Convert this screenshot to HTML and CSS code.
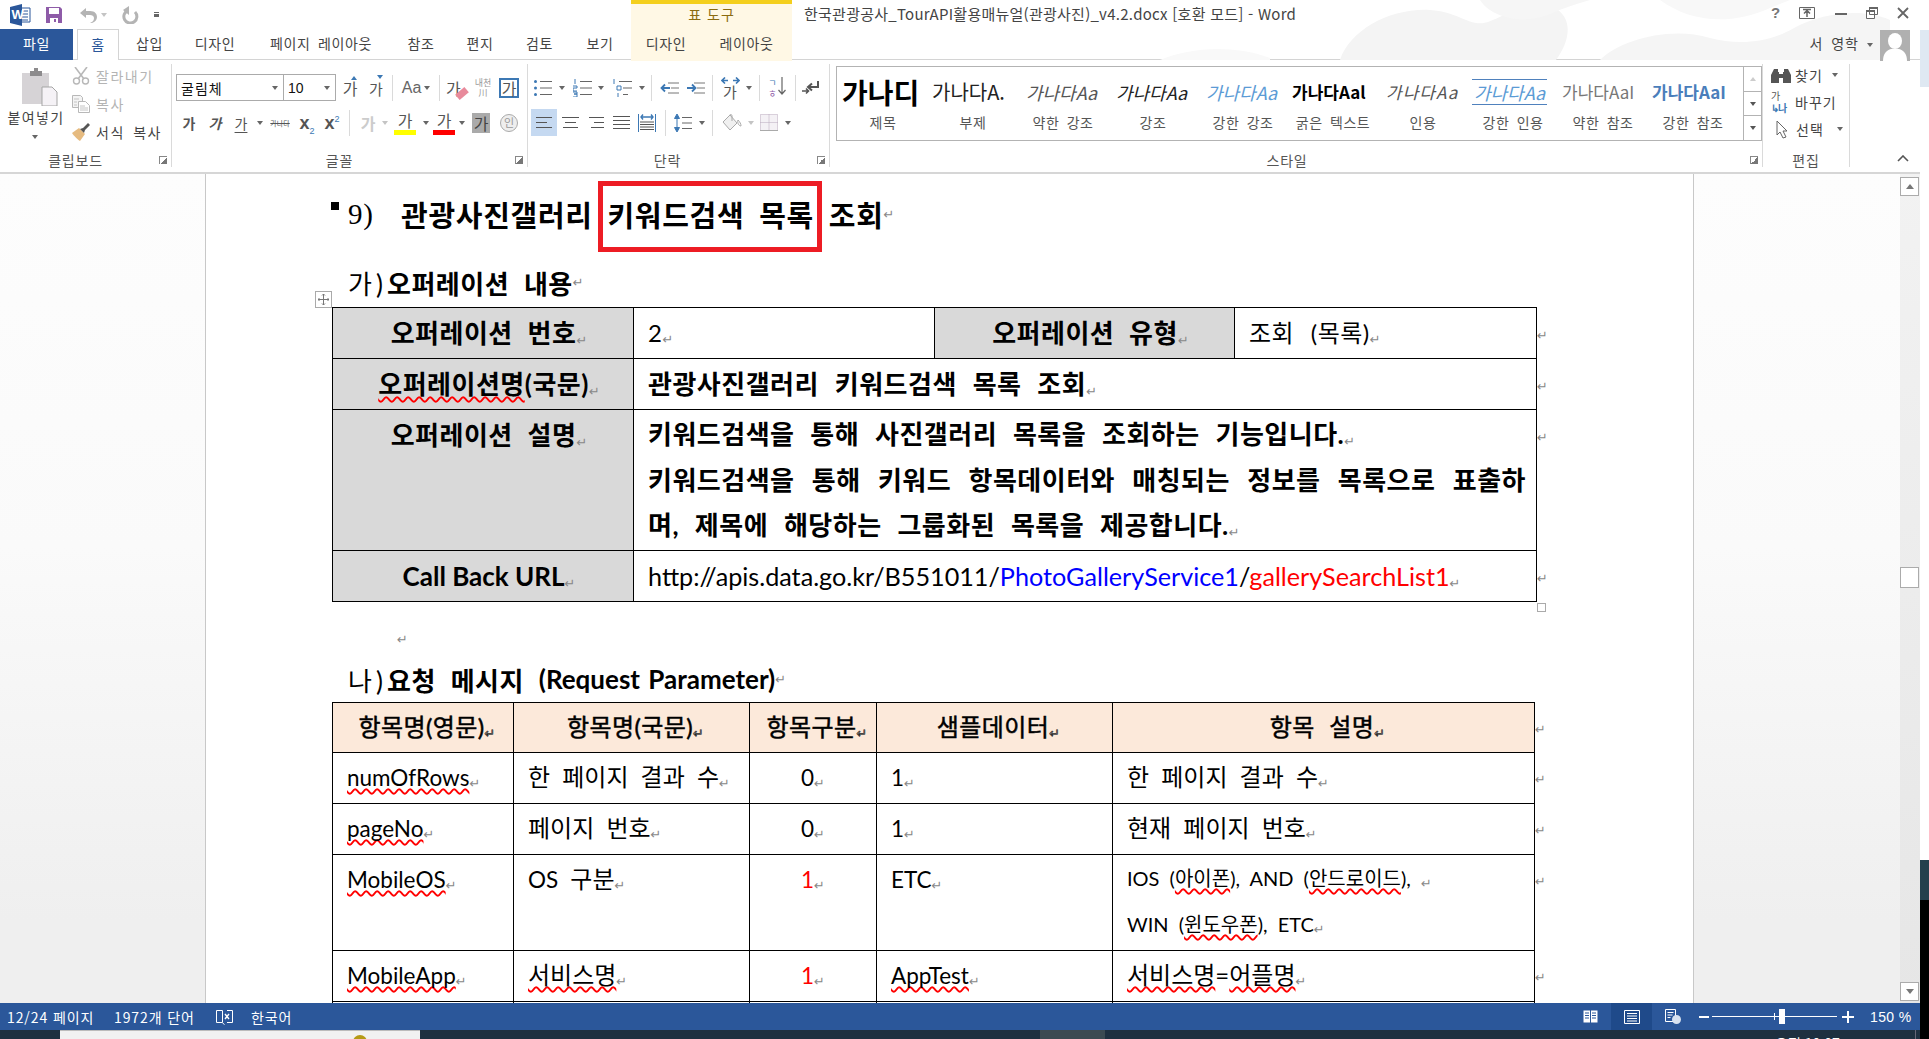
FILE: index.html
```html
<!DOCTYPE html>
<html lang="ko">
<head>
<meta charset="utf-8">
<title>한국관광공사_TourAPI활용매뉴얼(관광사진)_v4.2.docx [호환 모드] - Word</title>
<link rel="stylesheet" href="styles.css">
</head>
<body>
<div class="screen">
<div class="window">

  <header class="top">
    <svg class="clouds" width="820" height="60" viewBox="0 0 820 60">
      <path d="M240 60c10-30 50-52 90-50 30 2 40 18 58 12 20-8 50-26 70-12 16 12 10 34-2 50z" fill="#f4f4f4"/>
      <path d="M500 60c20-20 70-34 110-22 30 8 60 4 84-10 30-16 70-20 96-8v40z" fill="#f5f5f5"/>
      <path d="M380 0c10 16 40 26 70 14 14-6 26-10 40-14z" fill="#f6f6f6"/>
      <path d="M560 0c30 22 70 26 110 8l20-8z" fill="#f8f8f8"/>
      <path d="M60 60c30-12 70-16 110-2v2z" fill="#f9f9f9"/>
    </svg>
    <div class="titlebar">
      <div class="qat">
        <svg class="logo" width="22" height="22" viewBox="0 0 22 22">
          <path d="M10 4h11v14H10z" fill="#fff" stroke="#2b579a"/>
          <path d="M13 7h6M13 10h6M13 13h6M13 16h6" stroke="#2b579a"/>
          <path d="M1 3l12-3v22L1 19z" fill="#2b579a"/>
          <text x="2.500" y="15" class="logo-w">W</text>
        </svg>
        <svg class="save" width="18" height="18" viewBox="0 0 18 18">
          <path d="M1 1h14l2 2v14H1z" fill="#8e5ba8"/>
          <path d="M4 2h10v6H4z" fill="#fff"/>
          <path d="M5 12h8v5H5z" fill="#fff"/>
          <path d="M9 13h2v3H9z" fill="#8e5ba8"/>
        </svg>
        <svg class="undo" width="20" height="18" viewBox="0 0 20 18">
          <path d="M2 7l6-5v3h4c5 0 7 3 7 6s-2 5-5 6h-2c3-1 4-3 4-5s-2-3-4-3H8v3z" fill="#b4b4b4"/>
        </svg>
        <i class="car lite"></i>
        <svg class="redo" width="18" height="18" viewBox="0 0 18 18">
          <path d="M7 4.500a6.500 6.500 0 1 0 7 1.500" fill="none" stroke="#b4b4b4" stroke-width="3"/>
          <path d="M8 0v9L2 4z" fill="#b4b4b4"/>
        </svg>
        <i class="qat-more"></i>
      </div>
      <div class="ctx-head">표 도구</div>
      <div class="doc-title">한국관광공사_TourAPI활용매뉴얼(관광사진)_v4.2.docx [호환 모드] - Word</div>
      <div class="win-ctl">
        <span class="help">?</span>
        <svg width="16" height="12" viewBox="0 0 16 12"><path d="M.5.500h15v11H.5z" fill="none" stroke="#666"/><path d="M4 2.500h8M8 10V4M5 6.500L8 3.500l3 3" fill="none" stroke="#666" stroke-width="1.500"/></svg>
        <svg width="12" height="12" viewBox="0 0 12 12"><path d="M0 6h12v2H0z" fill="#666"/></svg>
        <svg width="12" height="12" viewBox="0 0 12 12"><path d="M3.500.500h8v7h-8zM.5 4h8v7.500h-8z" fill="#fff" stroke="#666"/><path d="M3 1h9M0 4h9" stroke="#666" stroke-width="2"/></svg>
        <svg width="12" height="12" viewBox="0 0 12 12"><path d="M1 1l10 10M11 1L1 11" stroke="#666" stroke-width="1.800"/></svg>
      </div>
    </div>
    <nav class="tabs">
      <div class="tab file">파일</div>
      <div class="tab active">홈</div>
      <div class="tab">삽입</div>
      <div class="tab">디자인</div>
      <div class="tab">페이지 레이아웃</div>
      <div class="tab">참조</div>
      <div class="tab">편지</div>
      <div class="tab">검토</div>
      <div class="tab">보기</div>
      <div class="tab ctx">디자인</div>
      <div class="tab ctx">레이아웃</div>
      <div class="user">
        <span class="user-name">서 영학</span><i class="car"></i>
        <svg class="avatar" width="30" height="31" viewBox="0 0 30 31">
          <path d="M0 0h30v31H0z" fill="#b0b0b0"/>
          <ellipse cx="15" cy="11" rx="7" ry="8" fill="#fff"/>
          <path d="M3 31c0-8 4-11 8-12h8c4 1 8 4 8 12z" fill="#fff"/>
        </svg>
      </div>
    </nav>
  </header>

  <section class="ribbon">
    <div class="group g-clip">
      <div class="body clip-body">
        <div class="paste">
          <svg width="36" height="38" viewBox="0 0 36 38">
            <path d="M0 5h27v31H0z" fill="#d6d3d6"/>
            <path d="M8 3h4V0h4v3h4v5H8z" fill="#8d8b8d"/>
            <path d="M20 19h10l5 5v14H20z" fill="#f5f2f6" stroke="#a5a5a5"/>
          </svg>
          <span>붙여넣기</span>
          <i class="car"></i>
        </div>
        <div class="clip-list">
          <div class="clip-row off">
            <svg width="18" height="18" viewBox="0 0 18 18"><path d="M3 0l9 12M15 0L6 12" stroke="#b8b8b8" stroke-width="1.600"/><circle cx="4.500" cy="14" r="3" fill="none" stroke="#b8b8b8" stroke-width="1.400"/><circle cx="13.500" cy="14" r="3" fill="none" stroke="#b8b8b8" stroke-width="1.400"/></svg>
            <span>잘라내기</span>
          </div>
          <div class="clip-row off">
            <svg width="18" height="18" viewBox="0 0 18 18"><path d="M.5.500h8l2 2v10H.5z" fill="#f4f4f4" stroke="#b8b8b8"/><path d="M6.500 6.500h7l4 4v7h-11z" fill="#fff" stroke="#b8b8b8"/><path d="M2 4h5M2 7h3M2 10h3M8 11h5M8 13h8M8 15h8" stroke="#c4c4c4"/></svg>
            <span>복사</span>
          </div>
          <div class="clip-row">
            <svg width="18" height="18" viewBox="0 0 18 18"><path d="M0 10l7-5 6 6-5 7c-2-1-6-5-8-8z" fill="#e6bb80"/><path d="M8 6l3-1 5-5 2 2-5 5-1 3z" fill="#555"/></svg>
            <span>서식 복사</span>
          </div>
        </div>
      </div>
      <div class="glabel">클립보드<i class="launch"></i></div>
    </div>

    <div class="group g-font">
      <div class="body">
        <div class="row font-r1">
          <div class="combo">굴림체<i class="car"></i></div>
          <div class="combo">10<i class="car"></i></div>
          <span class="ga">가<i class="tri up"></i></span>
          <span class="ga sm">가<i class="tri dn"></i></span>
          <i class="sep"></i>
          <span class="aa">Aa<i class="car"></i></span>
          <i class="sep"></i>
          <span class="ga eraser">가<i class="pink"></i></span>
          <span class="naecheon">내천<br>川</span>
          <span class="ga boxed">가</span>
        </div>
        <div class="row font-r2">
          <b class="fmt">가</b>
          <b class="fmt it">가</b>
          <span class="fmt un">가</span>
          <i class="car"></i>
          <span class="fmt st">가나다</span>
          <b class="fmt xx">x<sub>2</sub></b>
          <b class="fmt xx">x<sup>2</sup></b>
          <i class="sep"></i>
          <span class="ga ghost">가</span>
          <i class="car lite"></i>
          <span class="ga pen">가<i class="bar yellow"></i></span>
          <i class="car"></i>
          <span class="ga pen">가<i class="bar red"></i></span>
          <i class="car"></i>
          <span class="ga shade">가</span>
          <span class="circ">인</span>
        </div>
      </div>
      <div class="glabel">글꼴<i class="launch"></i></div>
    </div>

    <div class="group g-para">
      <div class="body">
        <div class="row para-r1">
          <svg width="19" height="18" viewBox="0 0 19 18"><path d="M6 2.500h12M6 9h12M6 15.500h12" stroke="#666"/><circle cx="1.500" cy="2.500" r="1.500" fill="#3c78b4"/><circle cx="1.500" cy="9" r="1.500" fill="#3c78b4"/><circle cx="1.500" cy="15.500" r="1.500" fill="#3c78b4"/></svg>
          <i class="car"></i>
          <svg width="19" height="18" viewBox="0 0 19 18"><path d="M7 2.500h12M7 9h12M7 15.500h12" stroke="#666"/><path d="M2 0v5M0 7h4v2H0v3h4M0 13h4v2H1h3v3H0" fill="none" stroke="#3c78b4"/></svg>
          <i class="car"></i>
          <svg width="20" height="18" viewBox="0 0 20 18"><path d="M7 2.500h13M11 9h9M11 15.500h5" stroke="#666"/><path d="M2 0v5M5 7h4v4H5zM6 14v4" fill="none" stroke="#3c78b4"/></svg>
          <i class="car"></i>
          <i class="sep"></i>
          <svg width="19" height="12" viewBox="0 0 19 12"><path d="M8 1h11M11 6h8M8 11h11" stroke="#777"/><path d="M10 6H2M5 2.500L1.500 6 5 9.500" fill="none" stroke="#3c78b4" stroke-width="1.800"/></svg>
          <svg width="19" height="12" viewBox="0 0 19 12"><path d="M8 1h11M11 6h8M8 11h11" stroke="#777"/><path d="M1 6h8M6 2.500L9.500 6 6 9.500" fill="none" stroke="#3c78b4" stroke-width="1.800"/></svg>
          <i class="sep"></i>
          <span class="dir"><svg width="19" height="7" viewBox="0 0 19 7"><path d="M1 3.500h6M4 .5l-3 3 3 3M12 3.500h6M15 .5l3 3-3 3" fill="none" stroke="#3c78b4" stroke-width="1.600"/></svg><span>가</span></span>
          <i class="car"></i>
          <i class="sep"></i>
          <span class="sortk"><span class="sort-a">ㄱ<br><b>ㅎ</b></span><svg width="8" height="18" viewBox="0 0 8 18"><path d="M4 0v17M.5 13L4 17l3.500-4" fill="none" stroke="#666" stroke-width="1.200"/></svg></span>
          <i class="sep"></i>
          <svg width="18" height="14" viewBox="0 0 18 14"><path d="M16 0v6H7M10 2.500L6 6l4 3.500" fill="none" stroke="#555" stroke-width="2"/><path d="M0 10h6M4 7.500L6.500 10 4 12.500" fill="none" stroke="#555" stroke-width="1.600"/></svg>
        </div>
        <div class="row para-r2">
          <span class="al on"><svg width="16" height="11" viewBox="0 0 16 11"><path d="M0 .5h16M0 5.500h11M0 10.500h16" stroke="#555"/></svg></span>
          <span class="al"><svg width="17" height="11" viewBox="0 0 17 11"><path d="M0 .5h17M3 5.500h11M1 10.500h15" stroke="#555"/></svg></span>
          <span class="al"><svg width="15" height="11" viewBox="0 0 15 11"><path d="M0 .5h15M5 5.500h10M2 10.500h13" stroke="#555"/></svg></span>
          <span class="al"><svg width="17" height="13" viewBox="0 0 17 13"><path d="M0 .5h17M0 4.500h17M0 8.500h17M0 12.500h17" stroke="#555"/></svg></span>
          <span class="al"><svg width="18" height="18" viewBox="0 0 18 18"><path d="M.5 0v18M17.500 0v18" stroke="#3c78b4"/><path d="M3 3h12M5 .5L3 3l2 2.500M13 .5L15 3l-2 2.500" fill="none" stroke="#3c78b4" stroke-width="1.400"/><path d="M2 8h14M2 10.500h14M2 13h14M2 15.500h14" stroke="#555"/></svg></span>
          <i class="sep"></i>
          <svg width="18" height="18" viewBox="0 0 18 18"><path d="M3 0L.5 4.500h5zM3 18L.5 13.500h5zM3 4v10" fill="#3c78b4" stroke="#3c78b4"/><path d="M8 3.500h10M8 9h10M8 14.500h10" stroke="#666"/></svg>
          <i class="car"></i>
          <i class="sep"></i>
          <svg width="20" height="18" viewBox="0 0 20 18"><path d="M8 1L1 8l7 8 7-7z" fill="#f0f0f0" stroke="#aaa"/><path d="M8 1c0-1 2-1 2 1v5M16 6c2 2 3 4 3 6-2 0-4-3-3-6z" fill="none" stroke="#aaa"/></svg>
          <i class="car lite"></i>
          <svg width="18" height="17" viewBox="0 0 18 17"><path d="M.5.500h17v16H.5z" fill="#f4f1f5" stroke="#b9a9bd" stroke-dasharray="1 1"/><path d="M9 .5v16M.5 8.500h17" stroke="#b9a9bd" stroke-dasharray="1 1"/><path d="M0 16.500h18" stroke="#aaa"/></svg>
          <i class="car"></i>
        </div>
      </div>
      <div class="glabel">단락<i class="launch"></i></div>
    </div>

    <div class="group g-style">
      <div class="body">
        <div class="gallery">
          <div class="sty"><div class="pv s-title">가나디</div><span>제목</span></div>
          <div class="sty"><div class="pv s-sub">가나다A.</div><span>부제</span></div>
          <div class="sty"><div class="pv s-weak">가나다Aa</div><span>약한 강조</span></div>
          <div class="sty"><div class="pv s-em">가나다Aa</div><span>강조</span></div>
          <div class="sty"><div class="pv s-strongem">가나다Aa</div><span>강한 강조</span></div>
          <div class="sty"><div class="pv s-bold">가나다Aal</div><span>굵은 텍스트</span></div>
          <div class="sty"><div class="pv s-quote">가나다Aa</div><span>인용</span></div>
          <div class="sty"><div class="pv s-iq"><em>가나다Aa</em></div><span>강한 인용</span></div>
          <div class="sty"><div class="pv s-ref">가나다AaI</div><span>약한 참조</span></div>
          <div class="sty"><div class="pv s-sref">가나다AaI</div><span>강한 참조</span></div>
          <div class="gal-scroll">
            <span class="dis"><i class="tri-b"></i></span>
            <span><i class="tri-b dn"></i></span>
            <span class="more"><i class="tri-b dn"></i></span>
          </div>
        </div>
      </div>
      <div class="glabel">스타일<i class="launch"></i></div>
    </div>

    <div class="group g-edit">
      <div class="body edit-body">
        <div class="ed-row">
          <svg width="20" height="18" viewBox="0 0 20 18"><path d="M3 3h4v3h1v11H0V9zM13 3h4l3 6v8h-8V6h1z" fill="#555"/><path d="M8 8h4v4H8z" fill="#555"/></svg>
          <span>찾기</span><i class="car"></i>
        </div>
        <div class="ed-row">
          <span class="repl"><span class="repl-a">가</span><span class="repl-b">↳나</span></span>
          <span>바꾸기</span>
        </div>
        <div class="ed-row sel">
          <svg width="12" height="19" viewBox="0 0 12 19"><path d="M1 1v14l3-3 3 6 3-1-3-6h4z" fill="#fff" stroke="#666"/></svg>
          <span>선택</span><i class="car"></i>
        </div>
      </div>
      <div class="glabel">편집</div>
    </div>

    <div class="collapse">
      <svg width="12" height="7" viewBox="0 0 12 7"><path d="M1 6l5-5 5 5" fill="none" stroke="#555" stroke-width="1.600"/></svg>
    </div>
  </section>

  <main class="doc">
    <div class="page">
      <h1 class="h-main">
        <i class="anchor"></i><span class="num">9)</span>관광사진갤러리 <span class="marked">키워드검색 목록</span> 조회<i class="pm">↵</i>
      </h1>

      <h2 class="h-sub first"><span class="h-no">가)</span>오퍼레이션 내용<i class="pm">↵</i></h2>
      <div class="tbl-wrap">
        <span class="move-handle"><svg width="11" height="11" viewBox="0 0 11 11"><path d="M5.500 0v11M0 5.500h11M4 1.500L5.500 0 7 1.500M4 9.500L5.500 11 7 9.500M1.500 4L0 5.500 1.500 7M9.500 4L11 5.500 9.500 7" fill="none" stroke="#777"/></svg></span>
        <table class="t-op">
          <colgroup><col class="c301"><col class="c301"><col class="c300"><col class="c302"><col class="c-eor"></colgroup>
          <tr>
            <th>오퍼레이션 번호<i class="pm">↵</i></th>
            <td class="reg">2<i class="pm">↵</i></td>
            <th>오퍼레이션 유형<i class="pm">↵</i></th>
            <td class="reg">조회 (목록)<i class="pm">↵</i></td>
            <td class="eor"><i class="pm">↵</i></td>
          </tr>
          <tr>
            <th><span class="wave">오퍼레이션명</span>(국문)<i class="pm">↵</i></th>
            <td colspan="3" class="strong">관광사진갤러리 키워드검색 목록 조회<i class="pm">↵</i></td>
            <td class="eor"><i class="pm">↵</i></td>
          </tr>
          <tr class="r-desc">
            <th>오퍼레이션 설명<i class="pm">↵</i></th>
            <td colspan="3" class="strong desc">
              <p>키워드검색을 통해 사진갤러리 목록을 조회하는 기능입니다.<i class="pm">↵</i></p>
              <p class="just">키워드검색을 통해 키워드 항목데이터와 매칭되는 정보를 목록으로 표출하</p>
              <p>며, 제목에 해당하는 그룹화된 목록을 제공합니다.<i class="pm">↵</i></p>
            </td>
            <td class="eor"><i class="pm">↵</i></td>
          </tr>
          <tr>
            <th class="call">Call Back URL<i class="pm">↵</i></th>
            <td colspan="3" class="reg url">http://apis.data.go.kr/B551011/<span class="blue">PhotoGalleryService1</span>/<span class="red">gallerySearchList1</span><i class="pm">↵</i></td>
            <td class="eor"><i class="pm">↵</i></td>
          </tr>
        </table>
        <span class="size-handle"></span>
      </div>

      <p class="empty"><i class="pm">↵</i></p>

      <h2 class="h-sub second"><span class="h-no">나)</span>요청 메시지 <span class="en-head">(Request Parameter)</span><i class="pm">↵</i></h2>
      <table class="t-req">
        <colgroup><col class="c181"><col class="c236"><col class="c127"><col class="c236"><col class="c422"><col class="c-eor"></colgroup>
        <tr class="hd">
          <th>항목명(영문)<i class="pm">↵</i></th>
          <th>항목명(국문)<i class="pm">↵</i></th>
          <th>항목구분<i class="pm">↵</i></th>
          <th>샘플데이터<i class="pm">↵</i></th>
          <th>항목 설명<i class="pm">↵</i></th>
          <td class="eor"><i class="pm">↵</i></td>
        </tr>
        <tr>
          <td><span class="wave en">numOfRows</span><i class="pm">↵</i></td>
          <td>한 페이지 결과 수<i class="pm">↵</i></td>
          <td class="mid"><span class="en">0</span><i class="pm">↵</i></td>
          <td><span class="en">1</span><i class="pm">↵</i></td>
          <td>한 페이지 결과 수<i class="pm">↵</i></td>
          <td class="eor"><i class="pm">↵</i></td>
        </tr>
        <tr>
          <td><span class="wave en">pageNo</span><i class="pm">↵</i></td>
          <td>페이지 번호<i class="pm">↵</i></td>
          <td class="mid"><span class="en">0</span><i class="pm">↵</i></td>
          <td><span class="en">1</span><i class="pm">↵</i></td>
          <td>현재 페이지 번호<i class="pm">↵</i></td>
          <td class="eor"><i class="pm">↵</i></td>
        </tr>
        <tr class="r-tall">
          <td><span class="wave en">MobileOS</span><i class="pm">↵</i></td>
          <td><span class="en">OS</span> 구분<i class="pm">↵</i></td>
          <td class="mid"><span class="red en">1</span><i class="pm">↵</i></td>
          <td><span class="en">ETC</span><i class="pm">↵</i></td>
          <td class="small">
            <p>IOS (<span class="wave">아이폰</span>), AND (<span class="wave">안드로이드</span>), <i class="pm">↵</i></p>
            <p>WIN (<span class="wave">윈도우폰</span>), ETC<i class="pm">↵</i></p>
          </td>
          <td class="eor"><i class="pm">↵</i></td>
        </tr>
        <tr>
          <td><span class="wave en">MobileApp</span><i class="pm">↵</i></td>
          <td><span class="wave">서비스명</span><i class="pm">↵</i></td>
          <td class="mid"><span class="red en">1</span><i class="pm">↵</i></td>
          <td><span class="wave en">AppTest</span><i class="pm">↵</i></td>
          <td><span class="wave">서비스명</span>=<span class="wave">어플명</span><i class="pm">↵</i></td>
          <td class="eor"><i class="pm">↵</i></td>
        </tr>
        <tr>
          <td></td><td></td><td></td><td></td><td></td>
          <td class="eor"></td>
        </tr>
      </table>
    </div>
    <div class="vscroll">
      <span class="sb-btn"><i class="tri-b"></i></span>
      <span class="sb-thumb"></span>
      <span class="sb-btn"><i class="tri-b dn"></i></span>
    </div>
  </main>

  <footer class="status">
    <span class="st-page">12/24 페이지</span>
    <span class="st-words">1972개 단어</span>
    <svg class="st-proof" width="17" height="16" viewBox="0 0 17 16"><path d="M.5 1.500h6v12h-6zM6.500 14l2 1.500" fill="none" stroke="#fff"/><path d="M11 1.500h5.500v12H11" fill="none" stroke="#fff"/><path d="M9 5l4 5M13 5l-4 5" stroke="#fff" stroke-width="1.400"/></svg>
    <span class="st-lang">한국어</span>
    <div class="st-right">
      <svg class="v-read" width="15" height="15" viewBox="0 0 15 15"><path d="M.5 1.500h14v12H.5z" fill="#fff"/><path d="M7.500 1v13" stroke="#2b579a"/><path d="M2 4h4M2 6.500h4M2 9h4M9 4h4M9 6.500h4M9 9h4" stroke="#2b579a"/></svg>
      <span class="v-print"><svg width="16" height="14" viewBox="0 0 16 14"><path d="M.5.500h15v13H.5z" fill="none" stroke="#fff"/><path d="M3 3.500h10M3 6h10M3 8.500h10M3 11h10" stroke="#fff"/></svg></span>
      <svg class="v-web" width="16" height="15" viewBox="0 0 16 15"><path d="M.5.500h10v12H.5z" fill="none" stroke="#fff"/><path d="M2.500 3.500h6M2.500 6h5M2.500 8.500h3" stroke="#fff"/><circle cx="11.500" cy="10.500" r="4.500" fill="#d8e2f0"/></svg>
      <i class="z-minus"></i>
      <span class="slider"><i class="tick"></i><i class="knob"></i></span>
      <svg class="z-plus" width="12" height="12" viewBox="0 0 12 12"><path d="M6 0v12M0 6h12" stroke="#fff" stroke-width="2"/></svg>
      <span class="st-zoom">150 %</span>
    </div>
  </footer>

  <div class="taskbar">
    <div class="thumb"><i class="dot"></i></div>
    <div class="task-grey"></div>
    <span class="clock">오전 10:07</span>
    <i class="task-line"></i>
  </div>
</div>

<div class="desk">
  <i class="d-blue"></i>
  <i class="d-white"></i>
  <i class="d-teal"></i>
  <i class="d-black"></i>
</div>
</div>
</body>
</html>
```

FILE: styles.css
```css
* { box-sizing: border-box; }

html, body {
  margin: 0;
  padding: 0;
  overflow: hidden;
}

body {
  font-family: "Noto Sans CJK KR", "Liberation Sans", sans-serif;
  color: #444;
  background: #000;
}

i { font-style: normal; }

p, h1, h2 { margin: 0; }

.screen {
  display: flex;
  width: 1929px;
  height: 1039px;
}

.window {
  width: 1920px;
  height: 1039px;
  display: flex;
  flex-direction: column;
  background: #fff;
}

/* right strip, a bit of the desktop */
.desk {
  width: 9px;
  display: flex;
  flex-direction: column;
}
.d-white { height: 773px; background: #fff; }
.d-blue { height: 87px; background: linear-gradient(#fff 30px, #dfe8f2 30px); }
.d-teal { height: 40px; background: #24404d; }
.d-black { flex: 1; background: #000; }

/* title bar and tabs */
.top {
  position: relative;
  height: 60px;
  border-bottom: 1px solid #d4d4d4;
}
.clouds {
  position: absolute;
  right: 0;
  top: 0;
}
.titlebar {
  position: relative;
  height: 29px;
  display: flex;
}
.qat {
  width: 631px;
  display: flex;
  align-items: center;
  padding-left: 9px;
}
.save { margin-left: 14px; }
.undo { margin-left: 15px; }
.redo { margin-left: 14px; }
.logo-w {
  font: bold 13px "Liberation Sans", sans-serif;
  fill: #fff;
}
.qat .lite { margin-left: 3px; }
.qat-more {
  width: 5px;
  height: 5px;
  margin-left: 15px;
  border-top: 1px solid #666;
  background: linear-gradient(#fff 1px, #666 1px);
}
.ctx-head {
  width: 161px;
  background: #fff8e5;
  border-top: 4px solid #f4cf1c;
  text-align: center;
  font-size: 14px;
  line-height: 20px;
  letter-spacing: 1px;
  color: #8a6b10;
}
.doc-title {
  margin-left: 12px;
  font-size: 15px;
  letter-spacing: .25px;
  line-height: 28px;
  color: #444;
  white-space: nowrap;
}
.win-ctl {
  margin-left: auto;
  width: 149px;
  padding: 0 11px 4px 0;
  display: flex;
  align-items: center;
  justify-content: space-between;
}
.help {
  font: bold 15px "Liberation Sans", sans-serif;
  color: #777;
}

.tabs {
  position: relative;
  height: 30px;
  display: grid;
  grid-template-columns: 73px 4px 42px 61px 70px 142px 58px 60px 59px 62px 70px 91px 1fr;
  font-size: 14px;
}
.tab {
  text-align: center;
  line-height: 28px;
  letter-spacing: .6px;
  word-spacing: 3px;
  color: #444;
}
.tab.file {
  grid-column: 1;
  background: #2b579a;
  color: #fff;
  height: 31px;
}
.tab.active {
  grid-column: 3;
  height: 31px;
  background: #fff;
  border: 1px solid #d4d4d4;
  border-bottom: 0;
  color: #2b579a;
  z-index: 1;
}
.tab.ctx { background: #fff8e5; }
.user {
  display: flex;
  align-items: center;
  justify-content: flex-end;
  padding-right: 10px;
  font-size: 14px;
  word-spacing: 3px;
  letter-spacing: 1px;
}
.user-name { margin-top: -5px; }
.user .car { margin: 0 7px 0 8px; }
.avatar { margin-top: 1px; }

/* carets */
.car {
  display: inline-block;
  width: 0;
  height: 0;
  border: 3.500px solid transparent;
  border-top: 4px solid #666;
  border-bottom: 0;
  justify-self: center;
}
.car.lite { border-top-color: #c4c4c4; }

/* ribbon */
.ribbon {
  height: 114px;
  display: flex;
  padding: 4px 0 5px;
  border-bottom: 2px solid #d6d6d6;
  background: #fff;
  font-size: 15px;
}
.group {
  position: relative;
  display: flex;
  flex-direction: column;
  border-right: 1px solid #dadada;
}
.g-clip { width: 172px; }
.g-font { width: 356px; padding-left: 4px; }
.g-para { width: 302px; padding-left: 2px; }
.g-style { width: 933px; padding-left: 6px; }
.g-edit { width: 87px; }
.body { flex: 1; }
.glabel {
  height: 16px;
  line-height: 18px;
  padding-right: 24px;
  font-size: 14px;
  text-align: center;
  letter-spacing: .8px;
  color: #555;
}
.g-clip .glabel { padding-right: 20px; }
.g-edit .glabel { padding-right: 0; }
.launch {
  position: absolute;
  right: 4px;
  bottom: 3px;
  width: 8px;
  height: 8px;
  border-left: 1px solid #888;
  border-top: 1px solid #888;
  background: linear-gradient(135deg, transparent 50%, #777 50%);
}

.clip-body {
  display: flex;
}
.paste {
  width: 72px;
  padding-top: 4px;
  display: flex;
  flex-direction: column;
  align-items: center;
  line-height: 20px;
  font-size: 14px;
  letter-spacing: 1.400px;
}
.paste svg { margin: 0 0 1px 8px; }
.paste .car { margin: 8px 0 0 -2px; }
.clip-list {
  display: flex;
  flex-direction: column;
  gap: 8px;
  padding-top: 2px;
}
.clip-row {
  display: flex;
  align-items: center;
  height: 20px;
  gap: 6px;
  font-size: 14px;
  letter-spacing: 1.500px;
  word-spacing: 3px;
  white-space: nowrap;
}
.clip-row.off { color: #b4b4b4; }

.row {
  display: grid;
  align-items: center;
  justify-items: center;
  height: 27px;
}
.font-r1 {
  margin-top: 10px;
  grid-template-columns: 108px 52px 28px 24px 8px 40px 6px 28px 26px 26px;
}
.font-r2 {
  margin-top: 8px;
  grid-template-columns: 26px 26px 26px 12px 28px 26px 24px 10px 28px 6px 34px 8px 28px 8px 30px 26px;
}
.para-r1 {
  margin-top: 10px;
  grid-template-columns: 26px 12px 28px 10px 32px 8px 10px 27px 25px 8px 28px 10px 10px 26px 10px 22px;
}
.para-r2 {
  margin-top: 8px;
  grid-template-columns: 27px 26px 26px 24px 28px 8px 28px 10px 10px 30px 8px 28px 10px;
}
.sep {
  width: 1px;
  height: 26px;
  background: #dadada;
}
.combo {
  justify-self: stretch;
  height: 27px;
  display: flex;
  align-items: center;
  justify-content: space-between;
  padding: 0 5px 0 4px;
  border: 1px solid #ababab;
  color: #111;
  font-size: 14px;
  letter-spacing: 1px;
}
.combo + .combo {
  margin-left: -1px;
  font-family: "Liberation Sans", sans-serif;
  letter-spacing: 0;
}
.ga {
  position: relative;
  font-size: 16px;
  line-height: 20px;
  color: #555;
}
.ga.sm { font-size: 15px; padding-top: 2px; }
.tri {
  position: absolute;
  top: -2px;
  right: 0;
  border: 3px solid transparent;
}
.tri.up { border-top: 0; border-bottom: 4px solid #3c78b4; }
.tri.dn { border-bottom: 0; border-top: 4px solid #3c78b4; }
.aa {
  display: flex;
  align-items: center;
  gap: 3px;
  font: 16px "Liberation Sans", sans-serif;
  color: #666;
}
.eraser { width: 20px; }
.pink {
  position: absolute;
  right: -2px;
  bottom: 1px;
  width: 12px;
  height: 7px;
  background: #e88a9b;
  transform: rotate(-40deg);
}
.naecheon {
  font-size: 9px;
  line-height: 10px;
  text-align: center;
  color: #999;
}
.boxed {
  width: 20px;
  height: 20px;
  line-height: 17px;
  text-align: center;
  border: 2px solid #3c78b4;
}
.fmt {
  font-size: 14px;
  color: #555;
}
.fmt.it { font-style: italic; }
.fmt.un { text-decoration: underline; text-underline-offset: 3px; }
.fmt.st {
  font-size: 7px;
  text-decoration: line-through;
  letter-spacing: 0;
}
.fmt.xx {
  font: bold 18px "Liberation Sans", sans-serif;
  line-height: 20px;
}
.xx sub, .xx sup {
  font-size: 9px;
  font-weight: normal;
  color: #3c78b4;
  line-height: 0;
}
.ghost { color: #ccc; font-weight: bold; }
.pen {
  width: 22px;
  height: 24px;
  text-align: center;
  line-height: 18px;
}
.bar {
  position: absolute;
  left: 0;
  bottom: 0;
  width: 100%;
  height: 5px;
}
.bar.yellow { background: #ff0; }
.bar.red { background: #f00; }
.shade {
  width: 18px;
  height: 20px;
  line-height: 20px;
  text-align: center;
  background: #aaa;
  color: #444;
}
.circ {
  width: 18px;
  height: 18px;
  line-height: 15px;
  border: 1px solid #aaa;
  border-radius: 50%;
  text-align: center;
  font-size: 11px;
  color: #999;
  background: #eee;
}
.dir {
  display: flex;
  flex-direction: column;
  align-items: center;
  width: 20px;
  font-size: 15px;
  line-height: 15px;
  color: #555;
}
.sortk {
  display: flex;
  gap: 1px;
}
.sort-a {
  font-size: 9px;
  line-height: 11px;
  color: #3c78b4;
}
.sort-a b { color: #8e5ba8; font-weight: normal; }
.al {
  width: 26px;
  height: 27px;
  display: flex;
  align-items: center;
  justify-content: center;
}
.al.on { background: #c5d9f1; }

/* style gallery */
.gallery {
  display: flex;
  height: 75px;
  margin-top: 2px;
  background: #fff;
  border: 1px solid #b3b3b3;
  padding-left: 1px;
}
.sty {
  width: 90px;
  flex: none;
  text-align: center;
  font-size: 14px;
  line-height: 18px;
  letter-spacing: .5px;
  word-spacing: 3px;
  color: #555;
  white-space: nowrap;
}
.pv {
  height: 46px;
  margin: 0 4px;
  padding: 3px 0 0 4px;
  overflow: hidden;
  display: flex;
  align-items: center;
  font-size: 18px;
  letter-spacing: 0;
  color: #222;
}
.s-title { font-size: 28px; font-weight: bold; color: #000; padding-left: 0; }
.s-sub { font-size: 20px; padding-left: 0; }
.s-weak { font-style: italic; color: #555; }
.s-em { font-style: italic; color: #222; }
.s-strongem { font-style: italic; color: #5b9bd5; }
.s-bold { font-weight: bold; color: #000; font-size: 17px; padding-left: 0; }
.s-quote { font-style: italic; color: #555; font-size: 17px; letter-spacing: 1px; }
.s-iq { color: #5b9bd5; padding-left: 0; }
.s-iq em {
  display: block;
  line-height: 24px;
  padding: 0 2px;
  border-top: 1px solid #4f81bd;
  border-bottom: 1px solid #4f81bd;
}
.s-ref { color: #777; font-size: 17px; padding-left: 0; }
.s-sref { color: #4a7ebb; font-weight: bold; font-size: 17px; padding-left: 0; }
.gal-scroll {
  margin-left: auto;
  width: 18px;
  display: flex;
  flex-direction: column;
  border-left: 1px solid #b3b3b3;
}
.gal-scroll span {
  flex: 1;
  display: flex;
  align-items: center;
  justify-content: center;
  border-bottom: 1px solid #b3b3b3;
}
.gal-scroll span:last-child { border-bottom: 0; }
.tri-b {
  width: 0;
  height: 0;
  border: 4px solid transparent;
  border-top: 0;
  border-bottom: 5px solid #777;
}
.tri-b.dn {
  border-bottom: 0;
  border-top: 5px solid #777;
}
.gal-scroll .tri-b { border-width: 0 3px 4px; }
.gal-scroll .tri-b.dn { border-width: 4px 3px 0; border-top-color: #555; border-bottom: 0; }
.gal-scroll .dis .tri-b { border-bottom-color: #ccc; }
.gal-scroll .more { box-shadow: inset 0 7px 0 -6px #fff; }

/* edit group */
.edit-body {
  display: flex;
  flex-direction: column;
  gap: 5px;
  padding: 0 0 0 8px;
}
.ed-row {
  display: flex;
  align-items: center;
  height: 22px;
  gap: 4px;
  font-size: 14px;
  letter-spacing: 1px;
}
.ed-row .car { margin-left: 5px; }
.ed-row.sel { padding-left: 5px; gap: 8px; }
.repl {
  display: flex;
  flex-direction: column;
  width: 20px;
  font-size: 10px;
  line-height: 12px;
  letter-spacing: -1px;
  white-space: nowrap;
}
.repl-a { color: #555; }
.repl-b { color: #3c78b4; font-weight: bold; }
.collapse {
  flex: 1;
  display: flex;
  align-items: flex-end;
  justify-content: flex-end;
  padding: 0 11px 5px 0;
}

/* document */
.doc {
  flex: 1;
  min-height: 0;
  display: flex;
  overflow: hidden;
  background: linear-gradient(#fdfdfd, #fafafa 45%, #efefef 90%);
}
.page {
  width: 1489px;
  margin-left: 205px;
  margin-right: 206px;
  padding-left: 126px;
  background: #fff;
  border-left: 1px solid #c8c8c8;
  border-right: 1px solid #c8c8c8;
  color: #000;
  font-family: Lato, "Noto Sans CJK KR", sans-serif;
  font-size: 24px;
}
.h-main {
  display: flex;
  align-items: center;
  height: 50px;
  margin: 15px 0 0 -1px;
  font-size: 29px;
  font-weight: bold;
  font-family: "Noto Sans CJK KR", sans-serif;
  letter-spacing: .7px;
  word-spacing: 6px;
  white-space: pre;
}
.anchor {
  width: 8px;
  height: 8px;
  background: #000;
  align-self: flex-start;
  margin: 13px 9px 0 0;
}
.num {
  width: 53px;
  font: 29px "Liberation Serif", serif;
}
.marked { position: relative; }
.marked::after {
  content: "";
  position: absolute;
  left: -9px;
  right: -8px;
  top: -12px;
  bottom: -17px;
  border: 5px solid #ed1c24;
}
.h-sub {
  display: flex;
  align-items: center;
  height: 40px;
  margin-left: 16px;
  font-size: 26px;
  font-weight: bold;
  letter-spacing: .5px;
  word-spacing: 8px;
  white-space: pre;
}
.h-sub.first { margin-top: 23px; margin-bottom: 5px; }
.h-sub.second { margin-top: 14px; margin-bottom: 3px; }
.h-no {
  width: 39px;
  font-weight: normal;
  letter-spacing: 4px;
}
.en-head { letter-spacing: 0; word-spacing: 2px; }
.pm {
  font: normal 13px "DejaVu Sans", sans-serif;
  color: #888;
  letter-spacing: 0;
  word-spacing: 0;
  vertical-align: -2px;
}
.empty {
  height: 24px;
  margin: 19px 0 0 65px;
  line-height: 24px;
}

.tbl-wrap { position: relative; }
.move-handle {
  position: absolute;
  left: -17px;
  top: -16px;
  width: 17px;
  height: 17px;
  display: flex;
  align-items: center;
  justify-content: center;
  background: #fff;
  border: 1px solid #aaa;
}
.size-handle {
  position: absolute;
  left: 1205px;
  bottom: -10px;
  width: 9px;
  height: 9px;
  border: 1px solid #aaa;
  background: #fff;
}

table {
  border-collapse: collapse;
  table-layout: fixed;
}
th, td {
  padding: 0 14px;
  line-height: 50px;
  vertical-align: top;
  text-align: left;
  white-space: nowrap;
}
th, td:not(.eor) { border: 1px solid #000; }
.eor {
  border: 0;
  padding: 0;
}
.eor .pm { vertical-align: 2px; }
.c-eor { width: 24px; }
.c300 { width: 300px; }
.c301 { width: 301px; }
.c302 { width: 302px; }
.c127 { width: 127px; }
.c181 { width: 181px; }
.c236 { width: 236px; }
.c422 { width: 422px; }

.t-op { width: 1228px; }
.t-op tr { height: 51px; }
.t-op td { padding-left: 14px; padding-right: 10px; }
.t-op th { padding-left: 20px; padding-right: 8px; }
.t-op .eor { padding: 0; }
.t-op th {
  background: #d9d9d9;
  text-align: center;
  font-size: 26px;
  font-weight: bold;
  letter-spacing: .5px;
  word-spacing: 8px;
}
.t-op th.call { letter-spacing: 0; word-spacing: 0; }
.t-op .reg { font-weight: normal; letter-spacing: .5px; word-spacing: 10px; }
.t-op .reg.url { letter-spacing: 0; word-spacing: 0; font-size: 25.200px; }
.strong {
  font-size: 26px;
  font-weight: bold;
  letter-spacing: .5px;
  word-spacing: 9px;
}
.t-op .r-desc { height: 141px; }
.desc { padding-top: 2px; }
.desc p { line-height: 45.500px; }
.desc .just {
  text-align: justify;
  text-align-last: justify;
}
.blue { color: #00f; }
.red { color: #f00; }

.t-req { width: 1226px; }
.t-req tr { height: 51px; }
.t-req td { line-height: 48px; }
.t-req .hd { height: 50px; }
.t-req .hd th {
  padding: 0 0 0 8px;
  line-height: 48px;
  background: #fce9da;
  text-align: center;
  font-weight: normal;
  letter-spacing: .4px;
  -webkit-text-stroke: .5px #000;
  word-spacing: 8px;
}
.t-req td { word-spacing: 6px; }
.t-req .r-tall { height: 96px; }
.t-req .mid { text-align: center; }
.en { font-size: 22.500px; }
.small { font-size: 20px; }
.small p { line-height: 46px; word-spacing: 5px; }
.wave {
  text-decoration: underline wavy #f00 1.500px;
  text-underline-offset: 2px;
  text-decoration-skip-ink: none;
}

/* scrollbar */
.vscroll {
  flex: none;
  width: 20px;
  display: flex;
  flex-direction: column;
  justify-content: space-between;
  padding-top: 3px;
  padding-bottom: 2px;
  background: linear-gradient(#f2f2f2, #e6e6e6);
}
.sb-btn {
  width: 19px;
  height: 19px;
  display: flex;
  align-items: center;
  justify-content: center;
  background: #fff;
  border: 1px solid #ababab;
}
.sb-thumb {
  width: 19px;
  height: 21px;
  margin-top: -24px;
  background: #fff;
  border: 1px solid #ababab;
}

/* status bar */
.status {
  height: 27px;
  display: flex;
  align-items: center;
  background: #2b579a;
  color: #fff;
  font-size: 14px;
  letter-spacing: .9px;
  white-space: nowrap;
}
.st-page { margin-left: 7px; width: 107px; }
.st-words { width: 102px; }
.st-proof { margin-right: 18px; }
.st-right {
  margin-left: auto;
  height: 27px;
  display: flex;
  align-items: center;
}
.v-print {
  width: 41px;
  height: 27px;
  margin: 0 13px;
  display: flex;
  align-items: center;
  justify-content: center;
  background: #1f4a8a;
}
.z-minus {
  width: 10px;
  height: 2px;
  margin: 0 3px 0 18px;
  background: #fff;
}
.slider {
  position: relative;
  width: 125px;
  height: 1px;
  background: #fff;
}
.tick {
  position: absolute;
  left: 62px;
  top: -3px;
  width: 1px;
  height: 7px;
  background: #fff;
}
.knob {
  position: absolute;
  left: 67px;
  top: -7px;
  width: 6px;
  height: 15px;
  background: #fff;
}
.z-plus { margin: 0 16px 0 5px; }
.st-zoom {
  width: 50px;
  font-family: "Liberation Sans", sans-serif;
  font-size: 14px;
  letter-spacing: .4px;
}

/* what shows of the taskbar */
.taskbar {
  position: relative;
  height: 9px;
  display: flex;
  overflow: hidden;
  background: #1e3040;
  flex: none;
}
.thumb {
  position: relative;
  width: 360px;
  margin-left: 60px;
  background: #f1f1f1;
  border-top: 1px solid #bbb;
}
.dot {
  position: absolute;
  left: 293px;
  top: 4px;
  width: 14px;
  height: 14px;
  border-radius: 50%;
  background: #b59a16;
}
.task-grey {
  width: 65px;
  margin-left: 620px;
  background: #3b4a52;
}
.clock {
  margin-left: 670px;
  margin-top: 6px;
  font-size: 14px;
  line-height: 14px;
  color: #fff;
  white-space: nowrap;
}
.task-line {
  position: absolute;
  left: 1915px;
  top: 0;
  width: 1px;
  height: 9px;
  background: #667;
}
```
